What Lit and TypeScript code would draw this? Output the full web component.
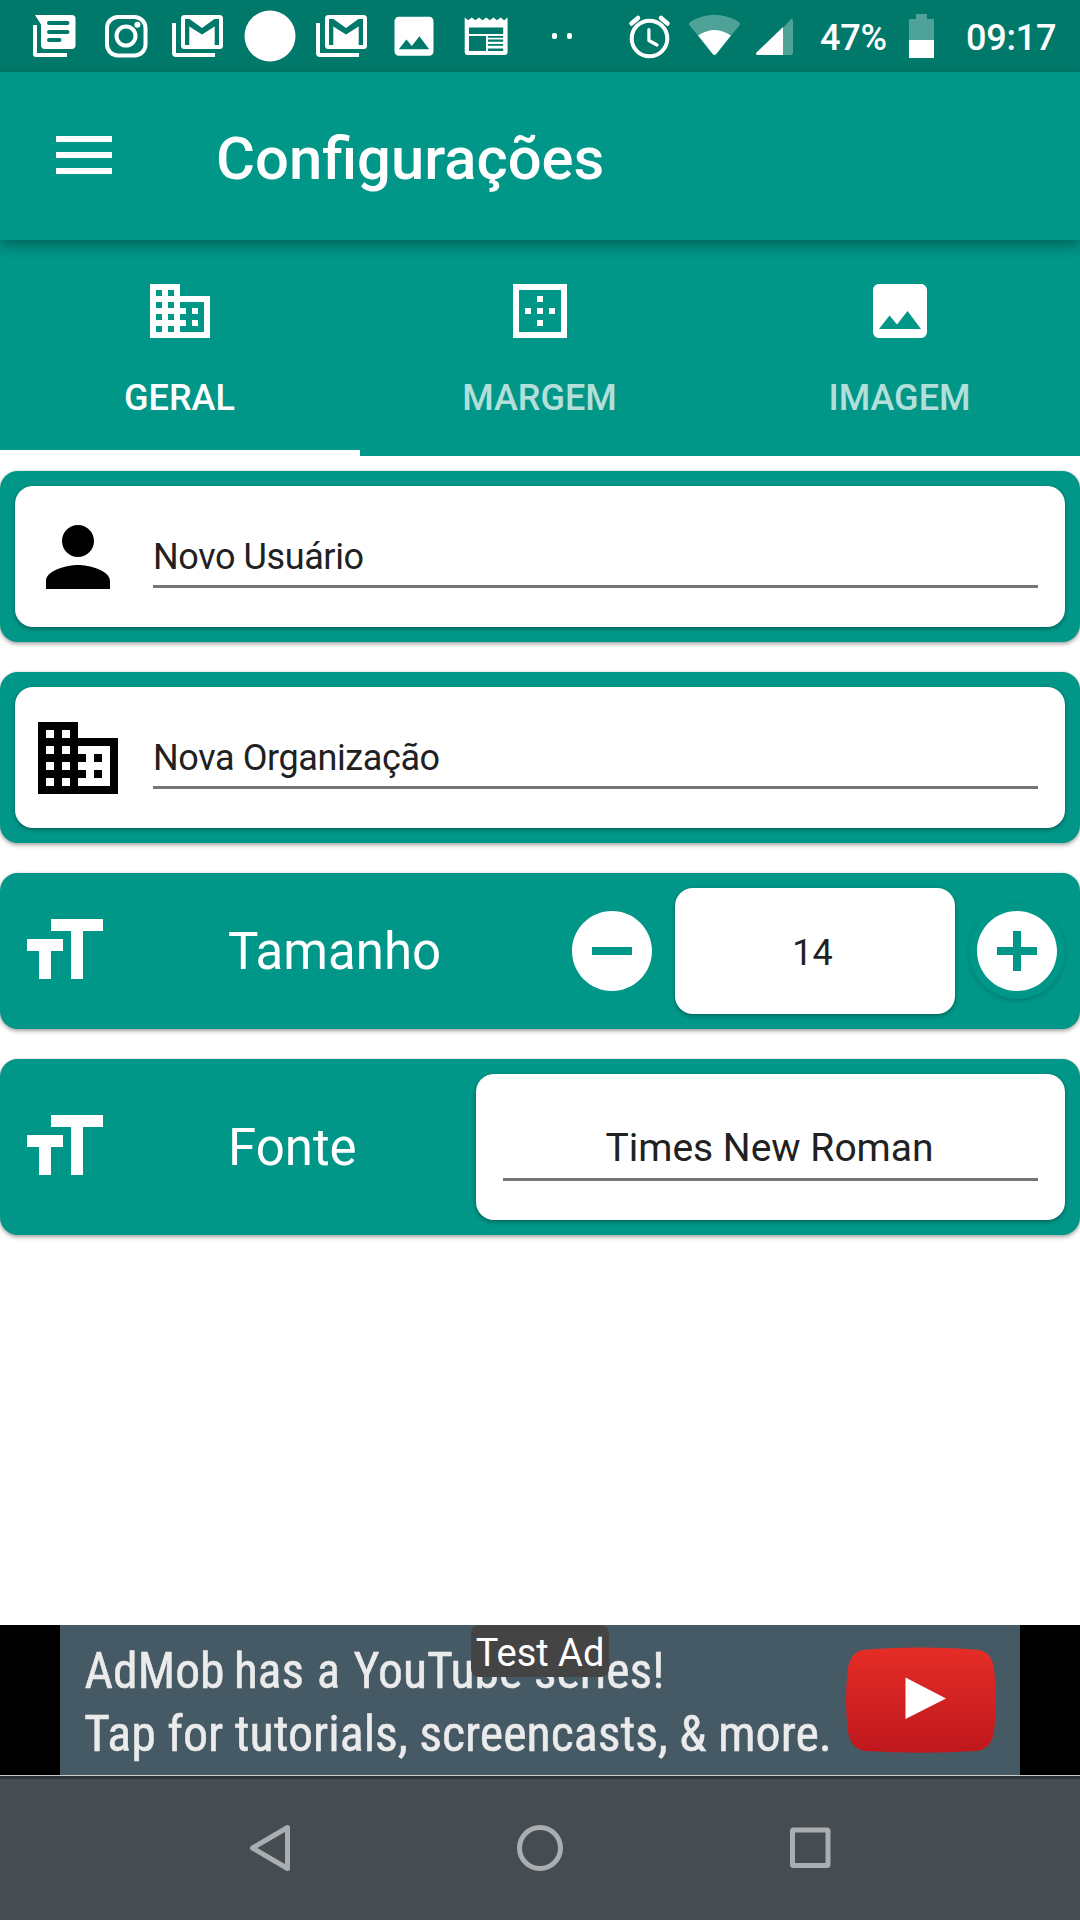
import { LitElement, html, css, svg } from "lit";
import { customElement, property, state } from "lit/decorators.js";
import { classMap } from "lit/directives/class-map.js";

const PATHS: Record<string, string> = {
  domain:
    "M12 7V3H2v18h20V7H12zM6 19H4v-2h2v2zm0-4H4v-2h2v2zm0-4H4V9h2v2zm0-4H4V5h2v2zm4 12H8v-2h2v2zm0-4H8v-2h2v2zm0-4H8V9h2v2zm0-4H8V5h2v2zm10 12h-8v-2h2v-2h-2v-2h2v-2h-2V9h8v10zm-2-8h-2v2h2v-2zm0 4h-2v2h2v-2z",
  border:
    "M13 7h-2v2h2V7zm0 4h-2v2h2v-2zm4 0h-2v2h2v-2zM3 3v18h18V3H3zm16 16H5V5h14v14zm-6-4h-2v2h2v-2zm-4-4H7v2h2v-2z",
  image:
    "M21 19V5c0-1.1-.9-2-2-2H5c-1.1 0-2 .9-2 2v14c0 1.1.9 2 2 2h14c1.1 0 2-.9 2-2zM8.5 13.5l2.5 3.01L14.5 12l4.5 6H5l3.5-4.5z",
  person:
    "M12 12c2.21 0 4-1.79 4-4s-1.79-4-4-4-4 1.79-4 4 1.79 4 4 4zm0 2c-2.67 0-8 1.34-8 4v2h16v-2c0-2.66-5.33-4-8-4z",
  size: "M9 4v3h5v12h3V7h5V4H9zm-6 8h3v7h3v-7h3V9H3v3z",
  minus:
    "M12 2C6.48 2 2 6.48 2 12s4.48 10 10 10 10-4.48 10-10S17.52 2 12 2zm5 11H7v-2h10v2z",
  plus:
    "M12 2C6.48 2 2 6.48 2 12s4.48 10 10 10 10-4.48 10-10S17.52 2 12 2zm5 11h-4v4h-2v-4H7v-2h4V7h2v4h4v2z",
};

@customElement("md-icon")
class MdIcon extends LitElement {
  @property() name = "";
  static styles = css`
    :host {
      display: block;
      width: 96px;
      height: 96px;
      flex: none;
    }
    .glyph {
      display: block;
      width: 100%;
      height: 100%;
      fill: currentColor;
    }
  `;
  render() {
    return html`<svg class="glyph" viewBox="0 0 24 24"><path d=${PATHS[this.name] ?? ""} /></svg>`;
  }
}

const gmail = svg`
  <path d="M10 23h4v30h39v4H14q-4 0-4-4z" />
  <rect x="19" y="15" width="42" height="34" rx="3.500" />
  <path class="cut" d="M23 45V19h4.500l12.500 9 12.500-9H57v26h-4.300V26.500L40 34.500 27.300 26.500V45z" />`;

const NOTIFICATIONS = [
  svg`
    <path d="M15 25h4v28h30v4H18q-3 0-3-3z" />
    <path d="M17 15h37q3.500 0 3.500 3.500V45q0 4-4 4H27q-4 0-4-4V24.500z" />
    <path class="cutline" d="M31 23h18.500M31 32h18.500M31 40h10.500" />`,
  svg`
    <rect class="line" x="17" y="17" width="38.500" height="38.500" rx="11" />
    <circle class="line" cx="36" cy="36" r="9.500" />
    <circle cx="47.400" cy="24.700" r="3" />`,
  gmail,
  svg`<circle cx="36" cy="36" r="25.500" />`,
  gmail,
  svg`<path transform="translate(10 10.300) scale(2.167)" d=${PATHS.image} />`,
  svg`
    <path d="M14.700 17.500l3.500 2.700 3.600-2.700 3.600 2.700 3.600-2.700 3.600 2.700 3.600-2.700 3.600 2.700 3.600-2.700 3.600 2.700 3.600-2.700 3.500 2.700 3.500-2.700V52q0 3-3 3H17.700q-3 0-3-3z" />
    <path class="cut" d="M19 27.500h34.200V34H19zM19 36h17v15H19zM38 36h15.200v1.700H38zM38 39.500h15.200v2.300H38zM38 44h15.200v1.700H38zM38 48.500h15.200V51H38z" />`,
  svg`<rect x="30" y="33" width="5" height="6" rx="2" /><rect x="45" y="33" width="5" height="6" rx="2" />`,
];

@customElement("status-bar")
class StatusBar extends LitElement {
  static styles = css`
    :host {
      display: flex;
      height: 72px;
      padding-left: 18px;
      background: #00796b;
      color: #fff;
      font: 500 36px/76px Roboto, sans-serif;
    }
    svg {
      display: block;
      flex: none;
      fill: #fff;
    }
    .cut {
      fill: #00796b;
    }
    .cutline {
      fill: none;
      stroke: #00796b;
      stroke-width: 4;
      stroke-linecap: round;
    }
    .line {
      fill: none;
      stroke: #fff;
      stroke-width: 4;
    }
    .hand {
      stroke-width: 3.2;
      stroke-linecap: round;
      stroke-linejoin: round;
    }
    .ear {
      stroke-width: 4.5;
      stroke-linecap: round;
    }
    .faded {
      fill-opacity: 0.31;
    }
    .alarm {
      margin-left: 20px;
    }
    .percent {
      width: 66px;
      margin-left: 23px;
      white-space: nowrap;
      letter-spacing: -0.2px;
    }
    .battery {
      margin-left: 23px;
    }
    .clock {
      margin-left: 32px;
      white-space: nowrap;
      letter-spacing: -0.2px;
    }
  `;
  render() {
    return html`
      ${NOTIFICATIONS.map((n) => html`<svg width="72" height="72" viewBox="0 0 72 72">${n}</svg>`)}
      <svg class="alarm" width="72" height="72" viewBox="0 0 72 72">
        <circle class="line" cx="35.500" cy="38.500" r="17.800" />
        <path class="line hand" d="M34.900 29.500V40.500L43 45" />
        <path class="line ear" d="M17.500 23.500L24 18M47 18L53.500 23.500" />
      </svg>
      <svg width="58" height="72" viewBox="0 0 58 72">
        <path class="faded" d="M4 26Q2 23.500 4.500 21.700Q28.500 8 52.500 21.700Q55 23.500 53 26L45 35.500Q28.500 24.500 12 35.500z" />
        <path d="M12 35.500Q28.500 24.500 45 35.500L30.300 54Q28.500 56 26.700 54z" />
      </svg>
      <svg width="53" height="72" viewBox="0 0 53 72">
        <path class="faded" d="M39 28l7.500-8.500q2.500-1.500 2.500 1.500v32q0 2-2 2h-8z" />
        <path d="M39 27v28H13.500q-2.500-.5-1-2.500z" />
      </svg>
      <span class="percent">47%</span>
      <svg class="battery" width="25" height="72" viewBox="0 0 25 72">
        <path class="faded" d="M7 14h11v5h7v21H0V19h7z" />
        <path d="M0 40h25v18H0z" />
      </svg>
      <span class="clock">09:17</span>
    `;
  }
}

@customElement("settings-field")
class SettingsField extends LitElement {
  @property() value = "";
  static styles = css`
    :host {
      display: flex;
      flex-direction: column;
      flex: 1;
      align-self: stretch;
      padding-top: 50px;
    }
    .value {
      padding-bottom: 7px;
      border-bottom: 3px solid #757575;
      white-space: nowrap;
    }
  `;
  render() {
    return html`<div class="value">${this.value}</div>`;
  }
}

@customElement("ad-banner")
class AdBanner extends LitElement {
  static styles = css`
    :host {
      display: flex;
      justify-content: flex-start;
      position: relative;
      height: 150px;
      padding-left: 60px;
      background: #000;
      font-family: Roboto, sans-serif;
    }
    .art {
      display: block;
      background: #465a65;
    }
    .copy {
      font: 400 50px "Roboto Condensed", Roboto, sans-serif;
      fill: #ebebeb;
      stroke: #ebebeb;
      stroke-width: 0.5;
    }
    .badge {
      position: absolute;
      left: 471px;
      top: 0;
      width: 138px;
      height: 52px;
      border-radius: 8px;
      background: #444;
      color: #fff;
      font-size: 38px;
      line-height: 57px;
      text-align: center;
      white-space: nowrap;
    }
  `;
  render() {
    return html`
      <svg class="art" width="960" height="150" viewBox="60 0 960 150">
        <defs>
          <linearGradient id="red" x1="0" y1="0" x2="0" y2="1">
            <stop offset="0" stop-color="#e52d27" />
            <stop offset="1" stop-color="#bf171d" />
          </linearGradient>
        </defs>
        <text class="copy" y="63">
          <tspan x="84.500" textLength="140" lengthAdjust="spacingAndGlyphs">AdMob</tspan>
          <tspan x="234" textLength="70" lengthAdjust="spacingAndGlyphs">has</tspan>
          <tspan x="317" textLength="23" lengthAdjust="spacingAndGlyphs">a</tspan>
          <tspan x="353.500" textLength="311" lengthAdjust="spacingAndGlyphs">YouTube series!</tspan>
        </text>
        <text class="copy" x="84" y="126" textLength="748" lengthAdjust="spacingAndGlyphs">Tap for tutorials, screencasts, &amp; more.</text>
        <path
          fill="url(#red)"
          d="M866 24.500Q921 20.500 976 24.500Q991 25.500 994 43Q998 75 994 107Q991 124.500 976 126Q921 129.500 866 126Q851 124.500 848 107Q844 75 848 43Q851 25.500 866 24.500z"
        />
        <path fill="#fff" d="M905.500 52.500V94L946 73.500z" />
      </svg>
      <div class="badge">Test Ad</div>
    `;
  }
}

@customElement("app-root")
class AppRoot extends LitElement {
  @state() private active = 0;
  @state() private size = 14;

  static styles = css`
    :host {
      display: flex;
      flex-direction: column;
      width: 1080px;
      height: 1920px;
      overflow: hidden;
      background: #fff;
      color: #212121;
      font-family: Roboto, sans-serif;
      font-size: 36px;
      line-height: 42px;
    }
    .appbar {
      display: flex;
      align-items: center;
      height: 168px;
      padding-left: 56px;
      box-sizing: border-box;
      background: #009688;
      color: #fff;
      position: relative;
      z-index: 1;
      box-shadow: 0 6px 12px rgba(0, 0, 0, 0.31);
    }
    .menu {
      display: flex;
      flex-direction: column;
      gap: 10px;
      width: 56px;
      margin: 0 104px 2px 0;
    }
    .bar {
      height: 6px;
      background: #fff;
    }
    .title {
      font-size: 59.75px;
      line-height: 72px;
      font-weight: 500;
      margin: 5px 0 0;
    }
    .tabs {
      display: grid;
      grid-template-columns: repeat(3, 1fr);
      height: 216px;
      background: #009688;
    }
    .tab {
      display: flex;
      flex-direction: column;
      align-items: center;
      gap: 30px;
      padding-top: 35px;
      border-bottom: 6px solid transparent;
      color: #fff;
      font-weight: 500;
    }
    .tab md-icon {
      width: 72px;
      height: 72px;
    }
    .label {
      opacity: 0.7;
      padding-right: 1px;
    }
    .active {
      border-bottom-color: #fff;
    }
    .active .label {
      opacity: 1;
    }
    .content {
      display: flex;
      flex-direction: column;
      gap: 30px;
      padding-top: 15px;
      flex: 1;
    }
    .card {
      display: flex;
      align-items: center;
      box-sizing: border-box;
      padding: 15px;
      border-radius: 18px;
      background: #009688;
      color: #fff;
      box-shadow: 0 2px 4px rgba(0, 0, 0, 0.36), 0 0 2px rgba(0, 0, 0, 0.12);
    }
    .panel {
      display: flex;
      align-items: center;
      box-sizing: border-box;
      border-radius: 18px;
      background: #fff;
      color: #212121;
      box-shadow: 0 2px 4px rgba(0, 0, 0, 0.3), 0 0 2px rgba(0, 0, 0, 0.1);
    }
    .entry {
      width: 100%;
      height: 141px;
      padding: 0 27px 0 15px;
      gap: 27px;
      letter-spacing: -0.4px;
    }
    .entry md-icon {
      color: #000;
    }
    .caption {
      flex: 1;
      padding: 2px 0 0 117px;
      font-size: 51px;
      line-height: 60px;
    }
    .amount {
      justify-content: center;
      width: 280px;
      height: 126px;
      margin: 0 14px 0 15px;
      padding: 4px 5px 0 0;
    }
    .raised {
      border-radius: 50%;
      box-shadow: 0 2px 4px rgba(0, 0, 0, 0.16);
    }
    .font {
      width: 589px;
      height: 146px;
      padding: 1px 27px 0;
      font-size: 39px;
      line-height: 46px;
      text-align: center;
    }
    .font settings-field {
      text-indent: -2px;
    }
    .nav {
      display: block;
      box-sizing: border-box;
      height: 145px;
      border-top: 1px solid #cacaca;
      background: linear-gradient(#2e3335 3px, #454d52 3px);
    }
    .softkeys {
      display: block;
      fill: none;
      stroke: #abaeb0;
      stroke-width: 5;
      stroke-linejoin: round;
    }
  `;

  private tabs = [
    { icon: "domain", text: "GERAL" },
    { icon: "border", text: "MARGEM" },
    { icon: "image", text: "IMAGEM" },
  ];

  render() {
    return html`
      <status-bar></status-bar>
      <header class="appbar">
        <div class="menu"><div class="bar"></div><div class="bar"></div><div class="bar"></div></div>
        <h1 class="title">Configurações</h1>
      </header>
      <nav class="tabs">
        ${this.tabs.map(
          (t, i) => html`<div class=${classMap({ tab: true, active: i === this.active })} @click=${() => (this.active = i)}>
            <md-icon name=${t.icon}></md-icon>
            <span class="label">${t.text}</span>
          </div>`
        )}
      </nav>
      <main class="content">
        <section class="card">
          <div class="panel entry">
            <md-icon name="person"></md-icon>
            <settings-field value="Novo Usuário"></settings-field>
          </div>
        </section>
        <section class="card">
          <div class="panel entry">
            <md-icon name="domain"></md-icon>
            <settings-field value="Nova Organização"></settings-field>
          </div>
        </section>
        <section class="card">
          <md-icon name="size"></md-icon>
          <div class="caption">Tamanho</div>
          <md-icon name="minus" @click=${() => this.size--}></md-icon>
          <div class="panel amount">${this.size}</div>
          <md-icon class="raised" name="plus" @click=${() => this.size++}></md-icon>
        </section>
        <section class="card">
          <md-icon name="size"></md-icon>
          <div class="caption">Fonte</div>
          <div class="panel font"><settings-field value="Times New Roman"></settings-field></div>
        </section>
      </main>
      <ad-banner></ad-banner>
      <footer class="nav">
        <svg class="softkeys" width="1080" height="144" viewBox="0 0 1080 144">
          <path d="M252.500 72L287.500 51.500V92.500z" />
          <circle cx="540" cy="72" r="20.500" />
          <rect x="792.500" y="54" width="35.500" height="35.500" rx="1" />
        </svg>
      </footer>
    `;
  }
}
